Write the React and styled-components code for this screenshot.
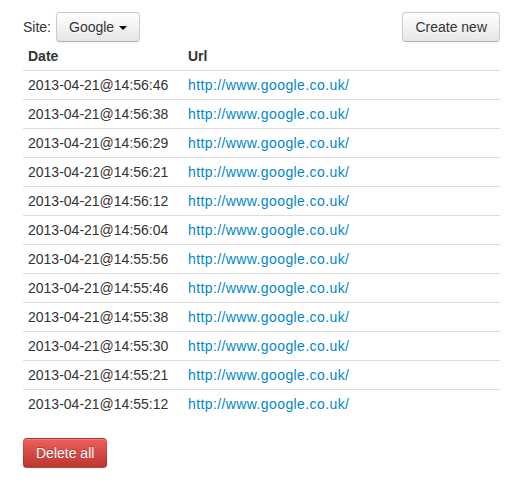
import styled, {createGlobalStyle} from "styled-components"

const GlobalStyle = createGlobalStyle`
    html, body {
        margin: 0;
        background: white;
    }
    body {
        font-family: "Liberation Sans", Arial, sans-serif;
        font-size: 14px;
        line-height: 20px;
        color: #333;
    }
`

const Page = styled.div`
    padding: 12px 24px 0 23px;
`

const Toolbar = styled.div`
    display: flex;
    justify-content: space-between;
    align-items: center;
`

const SitePicker = styled.div`
    display: flex;
    align-items: center;
    gap: 5px;
`

const Button = styled.button`
    font-family: inherit;
    font-size: 14px;
    line-height: 20px;
    padding: 4px 12px;
    color: #333;
    text-shadow: 0 1px 1px rgba(255, 255, 255, 0.75);
    background: linear-gradient(to bottom, #ffffff, #e6e6e6);
    border: 1px solid #cccccc;
    border-bottom-color: #b3b3b3;
    border-radius: 4px;
    box-shadow: inset 0 1px 0 rgba(255, 255, 255, 0.2), 0 1px 2px rgba(0, 0, 0, 0.05);
    cursor: pointer;
    display: inline-flex;
    align-items: center;
`

const DangerButton = styled(Button)`
    color: white;
    text-shadow: 0 -1px 0 rgba(0, 0, 0, 0.25);
    background: linear-gradient(to bottom, #ee5f5b, #bd362f);
    border-color: rgba(0, 0, 0, 0.1) rgba(0, 0, 0, 0.1) rgba(0, 0, 0, 0.25);
`

const Caret = styled.span`
    display: inline-block;
    width: 0;
    height: 0;
    margin-left: 5px;
    margin-top: 1px;
    border-top: 4px solid #000;
    border-left: 4px solid transparent;
    border-right: 4px solid transparent;
`

const Table = styled.table`
    width: 100%;
    border-collapse: collapse;
    border-spacing: 0;
    margin-bottom: 20px;
`

const Th = styled.th`
    text-align: left;
    font-weight: bold;
    padding: 4px 5px;
    width: ${({w}) => w || "auto"};
`

const Td = styled.td`
    padding: 4px 5px;
    border-top: 1px solid #dddddd;
`

const Link = styled.a`
    color: #0088cc;
    text-decoration: none;
    letter-spacing: 0.4px;
`

const times = [
    "14:56:46", "14:56:38", "14:56:29", "14:56:21", "14:56:12", "14:56:04",
    "14:55:56", "14:55:46", "14:55:38", "14:55:30", "14:55:21", "14:55:12",
]

export default function App() {
    return (
        <>
            <GlobalStyle />
            <Page>
                <Toolbar>
                    <SitePicker>
                        <span>Site:</span>
                        <Button>Google<Caret /></Button>
                    </SitePicker>
                    <Button>Create new</Button>
                </Toolbar>
                <Table>
                    <thead>
                        <tr>
                            <Th w="150px">Date</Th>
                            <Th>Url</Th>
                        </tr>
                    </thead>
                    <tbody>
                        {times.map(t =>
                            <tr key={t}>
                                <Td>2013-04-21@{t}</Td>
                                <Td><Link href="#">http://www.google.co.uk/</Link></Td>
                            </tr>
                        )}
                    </tbody>
                </Table>
                <DangerButton>Delete all</DangerButton>
            </Page>
        </>
    )
}
